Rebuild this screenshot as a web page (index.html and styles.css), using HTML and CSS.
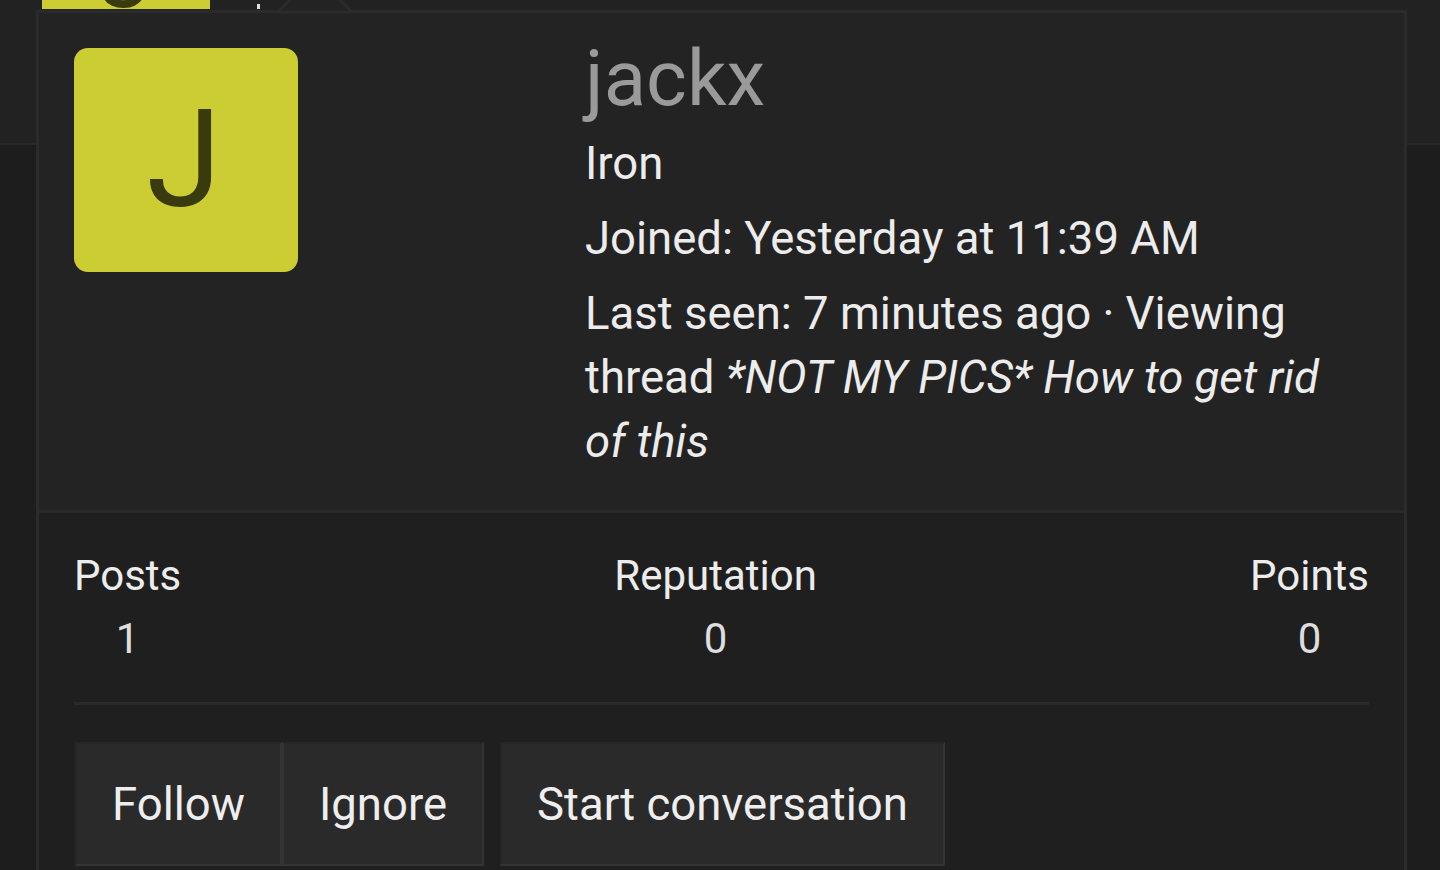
FILE: index.html
```html
<!DOCTYPE html>
<html lang="en">
<head>
<meta charset="utf-8">
<title>jackx</title>
<link rel="stylesheet" href="styles.css">
</head>
<body>
<div class="page">
  <div class="page-top">
    <div class="bg-row">
      <div class="bg-avatar"><span class="bg-letter">J</span></div>
      <span class="bg-mark"></span>
    </div>
  </div>
  <div class="page-rest"></div>

  <div class="tooltip">
    <svg class="tooltip-arrow" width="90" height="40" viewBox="0 0 90 40">
      <polygon points="8,38 45,1 82,38" fill="#232323" stroke="#2b2b2b" stroke-width="3"/>
    </svg>
    <div class="tt-header">
      <div class="tt-avatar-col">
        <div class="tt-avatar">J</div>
      </div>
      <div class="tt-info">
        <h4 class="tt-name">jackx</h4>
        <div class="tt-line">Iron</div>
        <div class="tt-line">Joined: Yesterday at 11:39 AM</div>
        <div class="tt-line">Last seen: 7 minutes ago · Viewing thread <em>*NOT MY PICS* How to get rid of this</em></div>
      </div>
    </div>
    <div class="tt-body">
      <div class="tt-stats">
        <dl class="stat">
          <dt>Posts</dt>
          <dd>1</dd>
        </dl>
        <dl class="stat">
          <dt>Reputation</dt>
          <dd>0</dd>
        </dl>
        <dl class="stat">
          <dt>Points</dt>
          <dd>0</dd>
        </dl>
      </div>
      <div class="tt-actions">
        <div class="btn-group">
          <a class="btn">Follow</a>
          <a class="btn">Ignore</a>
        </div>
        <a class="btn btn-solo">Start conversation</a>
      </div>
    </div>
  </div>
</div>
</body>
</html>
```
FILE: styles.css
```css
html, body {
  margin: 0;
  padding: 0;
  background: #1d1d1d;
  overflow: hidden;
}

body {
  width: 1440px;
  height: 870px;
  font-family: Roboto, "Noto Sans", "Liberation Sans", sans-serif;
  color: #ececec;
}

.page {
  position: relative;
  width: 1440px;
  height: 870px;
}

.page-top {
  height: 143px;
  background: #222222;
  border-bottom: 2px solid #282828;
}

.page-rest {
  height: 725px;
  background: #1d1d1d;
}

.bg-row {
  display: flex;
  align-items: flex-start;
  padding-left: 42px;
  gap: 47px;
}

.bg-avatar {
  width: 168px;
  height: 9px;
  background: #cccc33;
  overflow: hidden;
  display: flex;
  justify-content: center;
  align-items: flex-end;
}

.bg-letter {
  font-size: 100px;
  line-height: 1;
  color: #3a3a0f;
  margin-bottom: -14px;
}

.bg-mark {
  width: 3px;
  height: 5px;
  margin-top: 4px;
  background: #dddddd;
}

.tooltip {
  position: absolute;
  left: 36px;
  top: 10px;
  width: 1371px;
  height: 880px;
  box-sizing: border-box;
  border: 3px solid #2b2b2b;
  background: #1f1f1f;
}

.tooltip-arrow {
  position: absolute;
  left: 231px;
  top: -39px;
}

.tt-header {
  display: grid;
  grid-template-columns: 511px 1fr;
  padding: 35px 35px 36px 35px;
  background: #232323;
  border-bottom: 3px solid #292929;
}

.tt-avatar {
  width: 224px;
  height: 224px;
  border-radius: 14px;
  background: #cccc33;
  color: #3a3a0f;
  font-size: 136px;
  line-height: 224px;
  text-align: center;
  text-indent: -4px;
}

.tt-info {
  min-width: 0;
}

.tt-name {
  margin: 0 0 23px 0;
  font-size: 78px;
  font-weight: 400;
  line-height: 61px;
  color: #9a9a9a;
}

.tt-line {
  font-size: 45.5px;
  line-height: 64px;
  margin-bottom: 11px;
  color: #ececec;
}

.tt-line:last-child {
  margin-bottom: 0;
}

.tt-line em {
  font-style: italic;
}

.tt-body {
  padding: 31px 35px 0 35px;
}

.tt-stats {
  display: flex;
  justify-content: space-between;
  padding-bottom: 32px;
  border-bottom: 3px solid #2a2a2a;
}

.stat {
  margin: 0;
  text-align: center;
  font-size: 42px;
  line-height: 63px;
}

.stat dt {
  color: #ececec;
}

.stat dd {
  margin: 0;
  color: #dedede;
}

.tt-actions {
  display: flex;
  gap: 16px;
  margin-top: 37px;
  padding-left: 1px;
}

.btn-group {
  display: flex;
}

.btn {
  display: flex;
  align-items: center;
  height: 124px;
  box-sizing: border-box;
  padding: 0 35px;
  font-size: 45.5px;
  color: #eeeeee;
  background: #2a2a2a;
  border: 2px solid;
  border-color: #262626 #333333 #353535 #262626;
}

.btn-group .btn + .btn {
  border-left: 2px solid #333333;
}
```
